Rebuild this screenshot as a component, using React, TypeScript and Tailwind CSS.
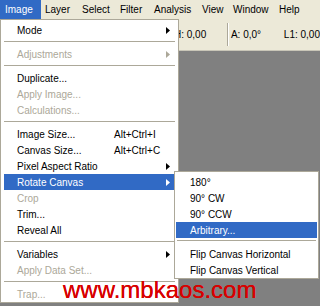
import React from "react";

type Item =
  | { kind: "sep" }
  | {
      kind: "item";
      label: string;
      shortcut?: string;
      arrow?: boolean;
      disabled?: boolean;
      active?: boolean;
    };

const mainItems: Item[] = [
  { kind: "item", label: "Mode", arrow: true },
  { kind: "sep" },
  { kind: "item", label: "Adjustments", arrow: true, disabled: true },
  { kind: "sep" },
  { kind: "item", label: "Duplicate..." },
  { kind: "item", label: "Apply Image...", disabled: true },
  { kind: "item", label: "Calculations...", disabled: true },
  { kind: "sep" },
  { kind: "item", label: "Image Size...", shortcut: "Alt+Ctrl+I" },
  { kind: "item", label: "Canvas Size...", shortcut: "Alt+Ctrl+C" },
  { kind: "item", label: "Pixel Aspect Ratio", arrow: true },
  { kind: "item", label: "Rotate Canvas", arrow: true, active: true },
  { kind: "item", label: "Crop", disabled: true },
  { kind: "item", label: "Trim..." },
  { kind: "item", label: "Reveal All" },
  { kind: "sep" },
  { kind: "item", label: "Variables", arrow: true },
  { kind: "item", label: "Apply Data Set...", disabled: true },
  { kind: "sep" },
  { kind: "item", label: "Trap...", disabled: true },
];

const subItems: Item[] = [
  { kind: "item", label: "180°" },
  { kind: "item", label: "90° CW" },
  { kind: "item", label: "90° CCW" },
  { kind: "item", label: "Arbitrary...", active: true },
  { kind: "sep" },
  { kind: "item", label: "Flip Canvas Horizontal" },
  { kind: "item", label: "Flip Canvas Vertical" },
];

const bar = [
  { label: "Image", w: "w-[41px]", pl: "pl-[5px]", active: true },
  { label: "Layer", w: "w-[37px]", pl: "pl-[4px]" },
  { label: "Select", w: "w-[38px]", pl: "pl-[4px]" },
  { label: "Filter", w: "w-[34px]", pl: "pl-[4px]" },
  { label: "Analysis", w: "w-[48px]", pl: "pl-[4px]" },
  { label: "View", w: "w-[31px]", pl: "pl-[4px]" },
  { label: "Window", w: "w-[46px]", pl: "pl-[4px]" },
  { label: "Help", w: "w-[40px]", pl: "pl-[4px]" },
];

function Arrow({ color }: { color: string }) {
  return (
    <svg width="4" height="7" viewBox="0 0 4 7" className="block">
      <polygon points="0,0 4,3.5 0,7" fill={color} />
    </svg>
  );
}

function MainMenu() {
  return (
    <div className="absolute left-0 top-[19px] w-[179px] bg-white border border-[#aca899] px-[3px] pt-[2px]">
      {mainItems.map((it, i) =>
        it.kind === "sep" ? (
          <div key={i} className="h-[8px] pt-[3px]">
            <div className="h-px bg-[#aca899]" />
          </div>
        ) : (
          <div
            key={i}
            className={`grid grid-cols-[97px_1fr_4px] items-center h-[16px] pl-[13px] pr-[5px] whitespace-nowrap ${
              it.active
                ? "bg-[#316ac5] text-white"
                : it.disabled
                ? "text-[#aca899]"
                : "text-black"
            }`}
          >
            <span>{it.label}</span>
            <span>{it.shortcut ?? ""}</span>
            <span className="flex items-center">
              {it.arrow ? (
                <Arrow
                  color={it.active ? "#ffffff" : it.disabled ? "#aca899" : "#000000"}
                />
              ) : null}
            </span>
          </div>
        )
      )}
    </div>
  );
}

function SubMenu() {
  return (
    <div className="absolute left-[174px] top-[171px] w-[145px] bg-white border border-[#aca899] px-[1px] pt-[2px]">
      {subItems.map((it, i) =>
        it.kind === "sep" ? (
          <div key={i} className="h-[8px] pt-[2px] px-[1px]">
            <div className="h-px bg-[#aca899]" />
          </div>
        ) : (
          <div
            key={i}
            className={`flex items-center h-[16px] pl-[14px] whitespace-nowrap ${
              it.active ? "bg-[#316ac5] text-white" : "text-black"
            }`}
          >
            {it.label}
          </div>
        )
      )}
    </div>
  );
}

export default function App() {
  return (
    <div className="relative flex flex-col w-[320px] h-[306px] overflow-hidden bg-[#808080] font-['Liberation_Sans',Arial,sans-serif] text-[10px] text-black">
      <div className="flex h-[19px] bg-[#ece9d8] leading-[19px] shrink-0">
        {bar.map((b) => (
          <div
            key={b.label}
            className={`${b.w} ${b.pl} h-[19px] whitespace-nowrap ${
              b.active ? "bg-[#316ac5] text-white" : "text-black"
            }`}
          >
            {b.label}
          </div>
        ))}
      </div>
      <div className="flex items-center h-[32px] shrink-0 bg-[#ece9d8] border-b border-[#c9c6b8] pl-[174px] whitespace-nowrap">
        <span className="w-[54px]">H: 0,00</span>
        <div className="flex h-[23px] w-[2px]">
          <div className="w-px bg-[#aca899]" />
          <div className="w-px bg-white" />
        </div>
        <span className="w-[54px] ml-[2px]">A: 0,0°</span>
        <span>L1: 0,00</span>
      </div>
      <div className="flex-1 bg-[#808080]" />
      <MainMenu />
      <SubMenu />
      <div className="absolute left-[63px] top-[278px] text-[24px] leading-none text-[#d80000] whitespace-nowrap [text-shadow:0_0_0.4px_#d80000]">
        www.mbkaos.com
      </div>
    </div>
  );
}
